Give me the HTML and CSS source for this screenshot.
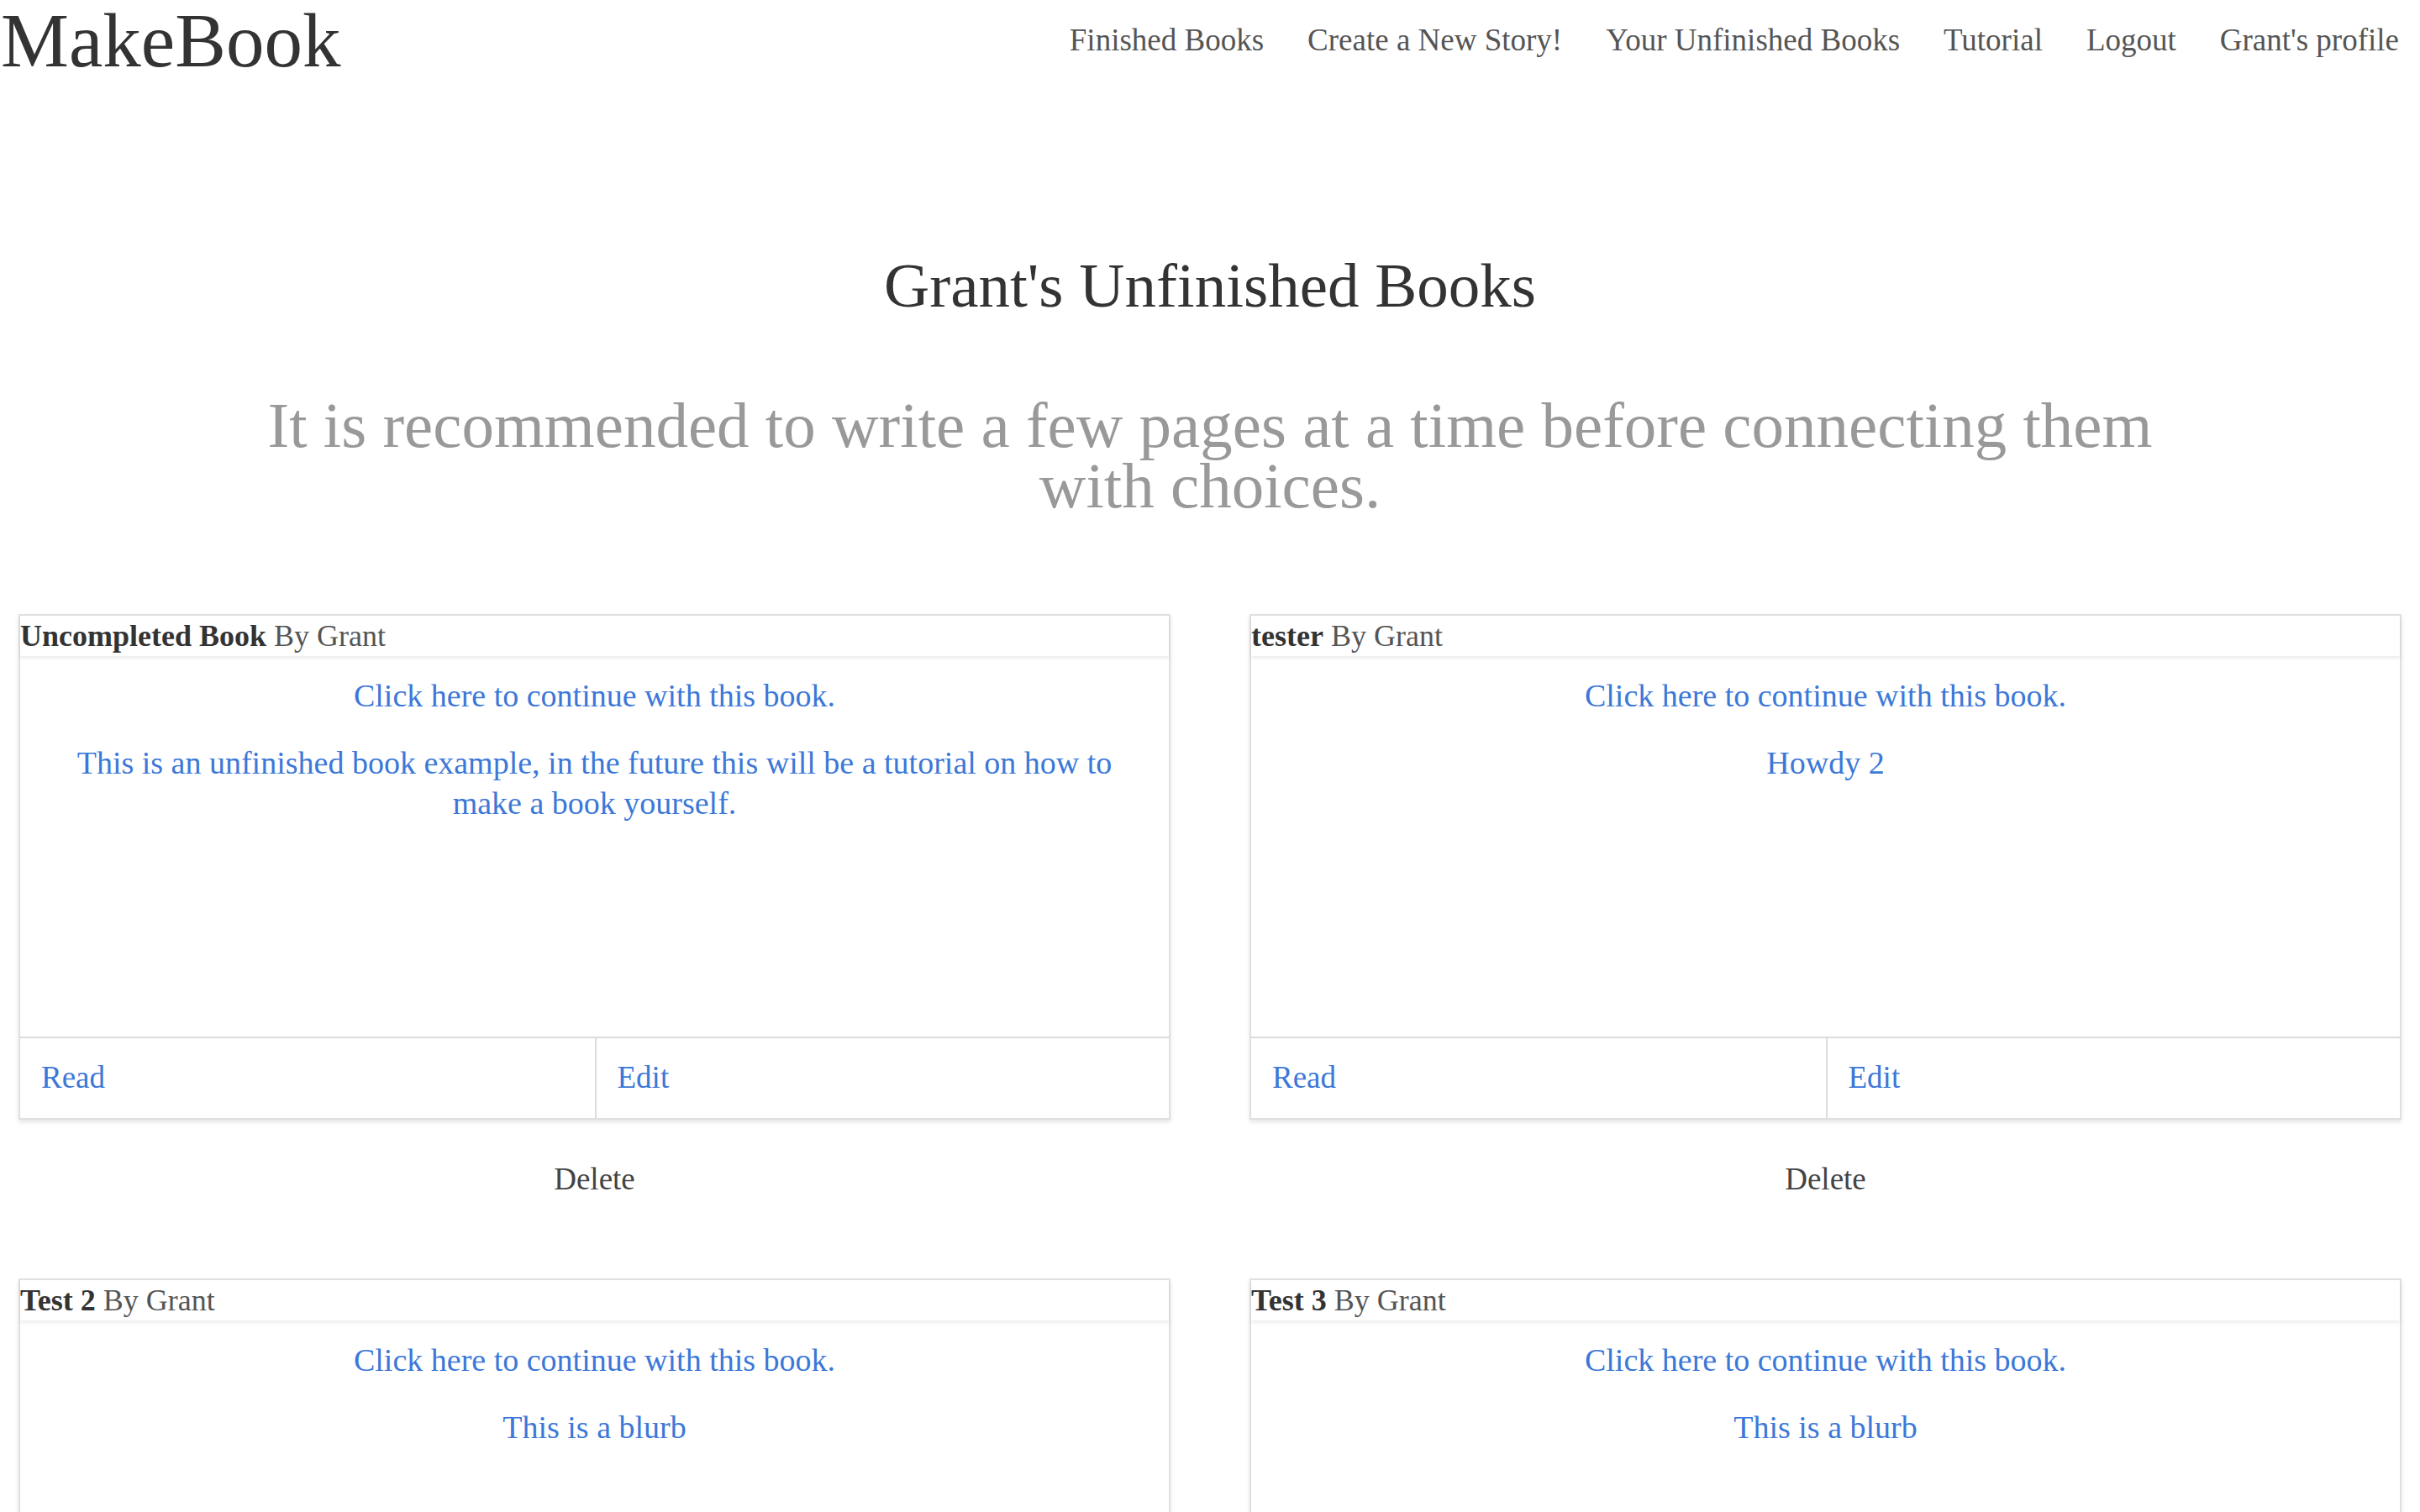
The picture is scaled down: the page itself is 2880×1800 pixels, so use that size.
FILE: index.html
```html
<!DOCTYPE html>
<html lang="en">
<head>
<meta charset="utf-8">
<title>MakeBook</title>
<link rel="stylesheet" href="styles.css">
</head>
<body>
<header class="topbar">
  <a class="logo" href="#">MakeBook</a>
  <nav class="nav">
    <a href="#">Finished Books</a>
    <a href="#">Create a New Story!</a>
    <a href="#">Your Unfinished Books</a>
    <a href="#">Tutorial</a>
    <a href="#">Logout</a>
    <a href="#">Grant's profile</a>
  </nav>
</header>
<main class="main">
  <h1 class="title">Grant's Unfinished Books</h1>
  <h2 class="subtitle">It is recommended to write a few pages at a time before connecting them with choices.</h2>
  <section class="grid">
    <div class="item">
      <div class="card">
        <div class="card-head"><span class="book">Uncompleted Book</span> By Grant</div>
        <div class="card-body">
          <a class="continue" href="#">Click here to continue with this book.</a>
          <p class="blurb">This is an unfinished book example, in the future this will be a tutorial on how to make a book yourself.</p>
        </div>
        <div class="card-foot">
          <a href="#">Read</a>
          <a href="#">Edit</a>
        </div>
      </div>
      <div class="delete">Delete</div>
    </div>
    <div class="item">
      <div class="card">
        <div class="card-head"><span class="book">tester</span> By Grant</div>
        <div class="card-body">
          <a class="continue" href="#">Click here to continue with this book.</a>
          <p class="blurb">Howdy 2</p>
        </div>
        <div class="card-foot">
          <a href="#">Read</a>
          <a href="#">Edit</a>
        </div>
      </div>
      <div class="delete">Delete</div>
    </div>
    <div class="item">
      <div class="card">
        <div class="card-head"><span class="book">Test 2</span> By Grant</div>
        <div class="card-body">
          <a class="continue" href="#">Click here to continue with this book.</a>
          <p class="blurb">This is a blurb</p>
        </div>
        <div class="card-foot">
          <a href="#">Read</a>
          <a href="#">Edit</a>
        </div>
      </div>
      <div class="delete">Delete</div>
    </div>
    <div class="item">
      <div class="card">
        <div class="card-head"><span class="book">Test 3</span> By Grant</div>
        <div class="card-body">
          <a class="continue" href="#">Click here to continue with this book.</a>
          <p class="blurb">This is a blurb</p>
        </div>
        <div class="card-foot">
          <a href="#">Read</a>
          <a href="#">Edit</a>
        </div>
      </div>
      <div class="delete">Delete</div>
    </div>
  </section>
</main>
</body>
</html>
```
FILE: styles.css
```css
* { box-sizing: border-box; }
html, body { margin: 0; padding: 0; background: #fff; }
body {
  font-family: "Liberation Serif", "Times New Roman", serif;
  color: #333;
}
a { text-decoration: none; }

.topbar {
  display: flex;
  justify-content: space-between;
  align-items: flex-start;
  height: 90px;
}
.logo {
  font-size: 91px;
  line-height: 98px;
  height: 90px;
  color: #333;
  padding-left: 1px;
}
.nav {
  display: flex;
  gap: 52px;
  padding: 24px 25px 0 0;
}
.nav a {
  font-size: 37px;
  line-height: 48px;
  color: #555;
}

.main { padding: 0 22px; }
.title {
  margin: 206px 0 0;
  text-align: center;
  font-size: 75px;
  line-height: 88px;
  font-weight: normal;
  color: #333;
}
.subtitle {
  margin: 86px auto 0;
  max-width: 2340px;
  text-align: center;
  font-size: 77px;
  line-height: 72px;
  font-weight: normal;
  color: #999;
}

.grid {
  margin-top: 117px;
  display: grid;
  grid-template-columns: 1fr 1fr;
  column-gap: 94px;
  row-gap: 94px;
}
.card {
  border: 2px solid #e0e0e0;
  background: #fff;
  box-shadow: 0 3px 5px rgba(0, 0, 0, 0.1);
  font-size: 38px;
  line-height: 48px;
}
.card-head {
  position: relative;
  z-index: 1;
  height: 48px;
  font-size: 36px;
  line-height: 48px;
  color: #555;
  box-shadow: 0 3px 4px rgba(0, 0, 0, 0.07);
  white-space: nowrap;
}
.book { font-weight: bold; color: #333; }
.card-body {
  height: 453px;
  padding: 23px 40px 0;
  text-align: center;
}
.continue { color: #3c78d8; display: block; }
.blurb { margin: 32px 0 0; color: #3c78d8; }
.card-foot {
  display: grid;
  grid-template-columns: 1fr 1fr;
  border-top: 2px solid #dcdcdc;
  font-size: 37px;
}
.card-foot a {
  color: #3c78d8;
  padding: 23px 25px 24px;
}
.card-foot a + a { border-left: 2px solid #dcdcdc; }
.delete {
  margin-top: 47px;
  text-align: center;
  font-size: 37px;
  line-height: 48px;
  color: #444;
}
```
